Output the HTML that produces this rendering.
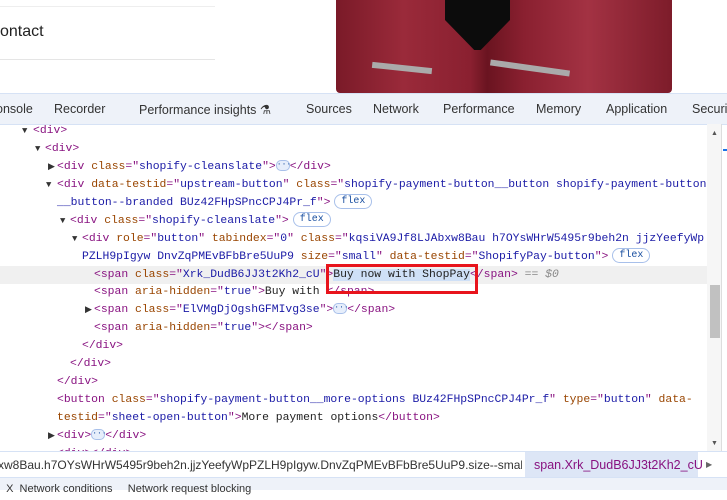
<!DOCTYPE html>
<html><head><style>
body{margin:0;width:727px;height:489px;overflow:hidden;background:#fff;font-family:"Liberation Sans",sans-serif;position:relative}
.abs{position:absolute}
.tabs{top:93px;left:0;width:727px;height:30px;background:#eef2f9;border-top:1px solid #d6e2f5;border-bottom:1px solid #d6e2f5;font-size:12.5px;color:#333}
.tabs span{position:absolute;top:8px;white-space:nowrap}
.code{font-family:"Liberation Mono",monospace;font-size:11.4px;white-space:pre;color:#222}
.row{position:absolute;left:0;width:707px;height:18px;line-height:18px}
.t{color:#881280}.a{color:#994500}.v{color:#1a1aa6}
.ar{position:absolute;font-size:9px;color:#333}
.flex{display:inline-block;border:1px solid #a8c0ea;border-radius:9px;padding:0 6px;height:13px;line-height:13px;font-size:10px;color:#1a4fa0;margin-left:4px;vertical-align:middle}
.dots{display:inline-block;width:12px;height:9px;border:1px solid #a8c0ea;border-radius:5px;background:#e6eefb;vertical-align:middle;font-size:8px;line-height:7px;text-align:center;color:#1a4fa0}
</style></head><body>
<div class="abs" style="left:0;top:6px;width:215px;height:1px;background:#eee"></div>
<div class="abs" style="left:0;top:23px;font-size:16px;color:#222">ontact</div>
<div class="abs" style="left:0;top:59px;width:215px;height:1px;background:#e5e5e5"></div>
<div class="abs" style="left:336px;top:0;width:336px;height:93px;background:linear-gradient(90deg,#7a1a28,#9a2a3a 20%,#8a2030 40%,#6a1420 45%,#8a2030 56%,#a33243 75%,#7d1c2a);border-radius:0 0 4px 4px"></div>
<div class="abs" style="left:445px;top:0;width:65px;height:50px;background:#0c0c0c;clip-path:polygon(0 0,100% 0,100% 40%,55% 100%,45% 100%,0 40%)"></div>
<div class="abs" style="left:372px;top:65px;width:60px;height:6px;background:#aaa;transform:rotate(6deg)"></div>
<div class="abs" style="left:490px;top:65px;width:80px;height:6px;background:#aaa;transform:rotate(8deg)"></div>
<div class="abs tabs">
<span style="left:-4px">onsole</span><span style="left:54px">Recorder</span><span style="left:139px">Performance insights ⚗</span><span style="left:306px">Sources</span><span style="left:373px">Network</span><span style="left:443px">Performance</span><span style="left:536px">Memory</span><span style="left:606px">Application</span><span style="left:692px">Securi</span>
</div>
<div class="abs" style="left:707px;top:124px;width:14px;height:327px;background:#f6f6f6"></div>
<div class="abs" style="left:710px;top:285px;width:10px;height:53px;background:#c1c1c1"></div>
<div class="abs" style="left:711px;top:130px;font-size:7px;color:#555">▲</div>
<div class="abs" style="left:711px;top:440px;font-size:7px;color:#555">▼</div>
<div class="abs" style="left:721px;top:124px;width:1px;height:327px;background:#ddd"></div>
<div class="abs" style="left:723px;top:149px;width:4px;height:2px;background:#1a73e8"></div>
<div class="code">
<div class="row" style="top:122px"><span class="ar" style="left:22px">▼</span><span class="abs" style="left:33px"><span class="t">&lt;div&gt;</span></span></div>
<div class="row" style="top:140px"><span class="ar" style="left:35px">▼</span><span class="abs" style="left:45px"><span class="t">&lt;div&gt;</span></span></div>
<div class="row" style="top:158px"><span class="ar" style="left:48px">▶</span><span class="abs" style="left:57px"><span class="t">&lt;div </span><span class="a">class</span><span class="t">="</span><span class="v">shopify-cleanslate</span><span class="t">"&gt;</span><span class="dots">···</span><span class="t">&lt;/div&gt;</span></span></div>
<div class="row" style="top:176px"><span class="ar" style="left:46px">▼</span><span class="abs" style="left:57px"><span class="t">&lt;div </span><span class="a">data-testid</span><span class="t">="</span><span class="v">upstream-button</span><span class="t">" </span><span class="a">class</span><span class="t">="</span><span class="v">shopify-payment-button__button shopify-payment-button</span></span></div>
<div class="row" style="top:194px"><span class="abs" style="left:57px"><span class="v">__button--branded BUz42FHpSPncCPJ4Pr_f</span><span class="t">"&gt;</span><span class="flex">flex</span></span></div>
<div class="row" style="top:212px"><span class="ar" style="left:60px">▼</span><span class="abs" style="left:70px"><span class="t">&lt;div </span><span class="a">class</span><span class="t">="</span><span class="v">shopify-cleanslate</span><span class="t">"&gt;</span><span class="flex">flex</span></span></div>
<div class="row" style="top:230px"><span class="ar" style="left:72px">▼</span><span class="abs" style="left:82px"><span class="t">&lt;div </span><span class="a">role</span><span class="t">="</span><span class="v">button</span><span class="t">" </span><span class="a">tabindex</span><span class="t">="</span><span class="v">0</span><span class="t">" </span><span class="a">class</span><span class="t">="</span><span class="v">kqsiVA9Jf8LJAbxw8Bau h7OYsWHrW5495r9beh2n jjzYeefyWp</span></span></div>
<div class="row" style="top:248px"><span class="abs" style="left:82px"><span class="v">PZLH9pIgyw DnvZqPMEvBFbBre5UuP9 </span><span class="a">size</span><span class="t">="</span><span class="v">small</span><span class="t">" </span><span class="a">data-testid</span><span class="t">="</span><span class="v">ShopifyPay-button</span><span class="t">"&gt;</span><span class="flex">flex</span></span></div>
<div class="row" style="top:266px;background:#f0f0f0;width:707px"><span class="abs" style="left:94px"><span class="t">&lt;span </span><span class="a">class</span><span class="t">="</span><span class="v">Xrk_DudB6JJ3t2Kh2_cU</span><span class="t">"&gt;</span><span style="background:#cfe0f7">Buy now with ShopPay</span><span class="t">&lt;/span&gt;</span><span style="color:#888;font-style:italic"> == $0</span></span></div>
<div class="row" style="top:283px"><span class="abs" style="left:94px"><span class="t">&lt;span </span><span class="a">aria-hidden</span><span class="t">="</span><span class="v">true</span><span class="t">"&gt;</span>Buy with <span class="t">&lt;/span&gt;</span></span></div>
<div class="row" style="top:301px"><span class="ar" style="left:85px">▶</span><span class="abs" style="left:94px"><span class="t">&lt;span </span><span class="a">class</span><span class="t">="</span><span class="v">ElVMgDjOgshGFMIvg3se</span><span class="t">"&gt;</span><span class="dots">···</span><span class="t">&lt;/span&gt;</span></span></div>
<div class="row" style="top:319px"><span class="abs" style="left:94px"><span class="t">&lt;span </span><span class="a">aria-hidden</span><span class="t">="</span><span class="v">true</span><span class="t">"&gt;&lt;/span&gt;</span></span></div>
<div class="row" style="top:337px"><span class="abs" style="left:82px"><span class="t">&lt;/div&gt;</span></span></div>
<div class="row" style="top:355px"><span class="abs" style="left:70px"><span class="t">&lt;/div&gt;</span></span></div>
<div class="row" style="top:373px"><span class="abs" style="left:57px"><span class="t">&lt;/div&gt;</span></span></div>
<div class="row" style="top:391px"><span class="abs" style="left:57px"><span class="t">&lt;button </span><span class="a">class</span><span class="t">="</span><span class="v">shopify-payment-button__more-options BUz42FHpSPncCPJ4Pr_f</span><span class="t">" </span><span class="a">type</span><span class="t">="</span><span class="v">button</span><span class="t">" </span><span class="a">data-</span></span></div>
<div class="row" style="top:409px"><span class="abs" style="left:57px"><span class="a">testid</span><span class="t">="</span><span class="v">sheet-open-button</span><span class="t">"&gt;</span>More payment options<span class="t">&lt;/button&gt;</span></span></div>
<div class="row" style="top:427px"><span class="ar" style="left:48px">▶</span><span class="abs" style="left:57px"><span class="t">&lt;div&gt;</span><span class="dots">···</span><span class="t">&lt;/div&gt;</span></span></div>
<div class="row" style="top:445px"><span class="abs" style="left:57px"><span class="t">&lt;div&gt;&lt;/div&gt;</span></span></div>
</div>
<div class="abs" style="left:326px;top:264px;width:146px;height:24px;border:3px solid #e8141c"></div>
<div class="abs" style="left:0;top:451px;width:727px;height:26px;background:#fff;border-top:1px solid #d6e2f5;font-size:12px;line-height:26px;white-space:nowrap">
<span class="abs" style="left:-2px;width:524px;overflow:hidden;color:#333">xw8Bau.h7OYsWHrW5495r9beh2n.jjzYeefyWpPZLH9pIgyw.DnvZqPMEvBFbBre5UuP9.size--small</span>
<span class="abs" style="left:525px;width:173px;height:26px;background:#dde6f6;color:#881280;padding-left:9px;box-sizing:border-box;font-size:12.5px">span.Xrk_DudB6JJ3t2Kh2_cU</span>
<span class="abs" style="left:706px;font-size:8px;color:#666">▶</span>
</div>
<div class="abs" style="left:0;top:477px;width:727px;height:12px;background:#eef2f9;border-top:1px solid #d6e2f5;font-size:11px;color:#333;line-height:22px;white-space:nowrap">&nbsp;&nbsp;X&nbsp;&nbsp;Network conditions&nbsp;&nbsp;&nbsp;&nbsp;&nbsp;Network request blocking</div>
</body></html>
